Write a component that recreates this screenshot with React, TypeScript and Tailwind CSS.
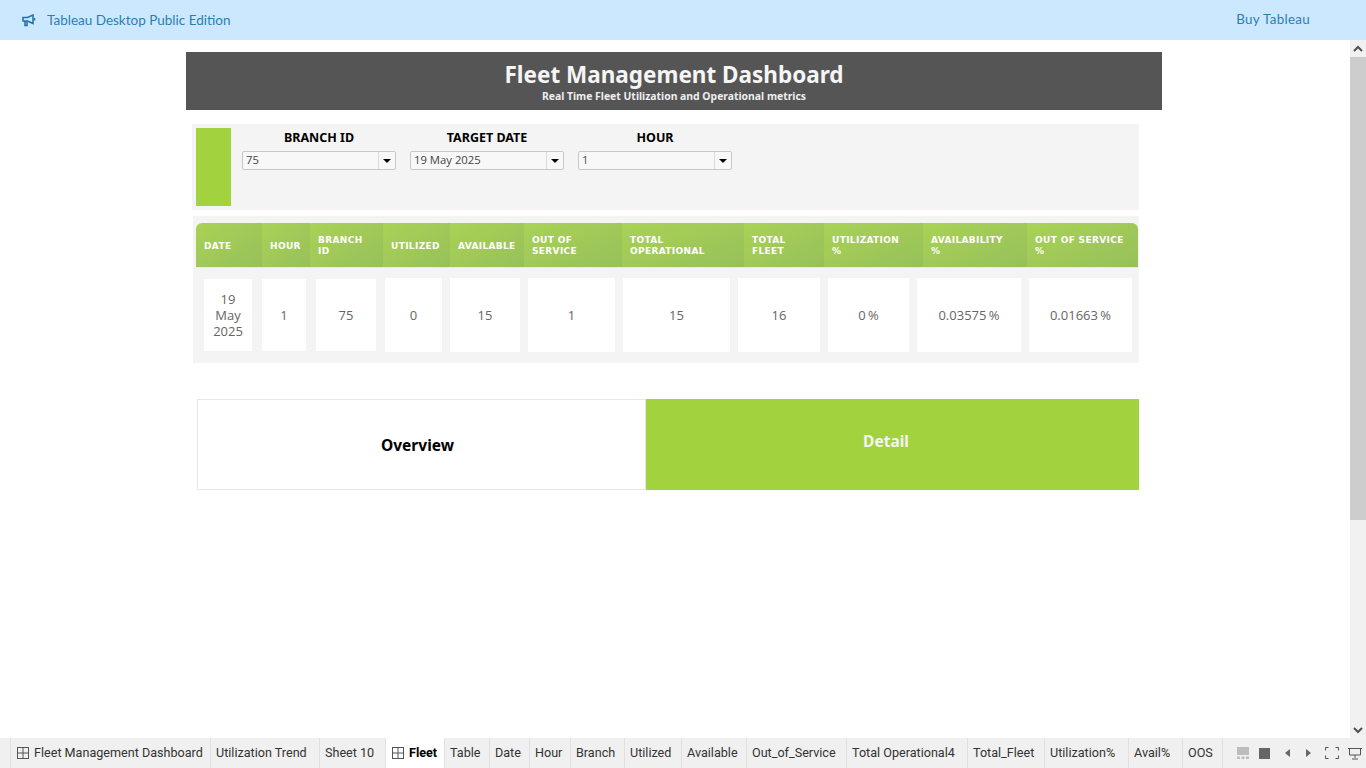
import React from 'react';

const headFont = "font-['Noto_Sans',sans-serif]";

const columns = [
  { head: 'DATE', width: 'w-[66px]', rounded: 'rounded-tl-[6px]' },
  { head: 'HOUR', width: 'w-[48px]' },
  { head: 'BRANCH\nID', width: 'w-[73px]' },
  { head: 'UTILIZED', width: 'w-[67px]' },
  { head: 'AVAILABLE', width: 'w-[74px]' },
  { head: 'OUT OF\nSERVICE', width: 'w-[98px]' },
  { head: 'TOTAL\nOPERATIONAL', width: 'w-[122px]' },
  { head: 'TOTAL\nFLEET', width: 'w-[80px]' },
  { head: 'UTILIZATION\n%', width: 'w-[99px]' },
  { head: 'AVAILABILITY\n%', width: 'w-[104px]' },
  { head: 'OUT OF SERVICE\n%', width: 'w-[111px]', rounded: 'rounded-tr-[6px]' },
];

const cells = [
  { value: '19\nMay\n2025', cls: 'w-[48px] ml-[8px] h-[72px]' },
  { value: '1', cls: 'w-[44px] ml-[10px] h-[72px]' },
  { value: '75', cls: 'w-[60px] ml-[10px] h-[72px]' },
  { value: '0', cls: 'w-[57px] ml-[9px] h-[74px]' },
  { value: '15', cls: 'w-[70px] ml-[8px] h-[74px]' },
  { value: '1', cls: 'w-[87px] ml-[8px] h-[74px]' },
  { value: '15', cls: 'w-[107px] ml-[8px] h-[74px]' },
  { value: '16', cls: 'w-[82px] ml-[8px] h-[74px]' },
  { value: '0 %', cls: 'w-[81px] ml-[8px] h-[74px]' },
  { value: '0.03575 %', cls: 'w-[104px] ml-[8px] h-[74px]' },
  { value: '0.01663 %', cls: 'w-[103px] ml-[8px] h-[74px]' },
];

const tabs = [
  { name: 'Fleet Management Dashboard', width: 'w-[200px]', icon: true },
  { name: 'Utilization Trend', width: 'w-[109px]' },
  { name: 'Sheet 10', width: 'w-[66px]' },
  { name: 'Fleet', width: 'w-[59px]', icon: true, active: true },
  { name: 'Table', width: 'w-[45px]' },
  { name: 'Date', width: 'w-[40px]' },
  { name: 'Hour', width: 'w-[41px]' },
  { name: 'Branch', width: 'w-[54px]' },
  { name: 'Utilized', width: 'w-[57px]' },
  { name: 'Available', width: 'w-[65px]' },
  { name: 'Out_of_Service', width: 'w-[100px]' },
  { name: 'Total Operational4', width: 'w-[121px]' },
  { name: 'Total_Fleet', width: 'w-[77px]' },
  { name: 'Utilization%', width: 'w-[84px]' },
  { name: 'Avail%', width: 'w-[54px]' },
  { name: 'OOS', width: 'w-[40px]' },
];

function Megaphone() {
  return (
    <svg width="14" height="13" viewBox="0 0 14 13" fill="none" stroke="#1f6fa8" strokeWidth="1.5">
      <path d="M1 3.5h4.5L11 1v8.5L5.5 7H1z" />
      <path d="M3 7v4.5h2V7.5" />
      <path d="M12.5 4v2.5" />
    </svg>
  );
}

function GridIcon() {
  return (
    <svg width="12" height="12" viewBox="0 0 12 12" fill="none" stroke="#555" strokeWidth="1" className="shrink-0">
      <rect x="0.5" y="0.5" width="11" height="11" />
      <path d="M6 0.5v11M0.5 6h11" />
    </svg>
  );
}

function Filter({ label, value, valueCls }: { label: string; value: string; valueCls?: string }) {
  return (
    <div className="w-[154px] flex flex-col">
      <div className={`h-[23px] text-center text-[12.5px] leading-[19px] font-bold text-black ${headFont}`}>{label}</div>
      <div className="h-[19px] flex items-center border border-[#c8c8c8] rounded-[2px] bg-[#f8f8f8]">
        <span className={`flex-1 pl-[3px] text-[11.3px] font-['Open_Sans',sans-serif] ${valueCls ?? 'text-[#444]'}`}>{value}</span>
        <span className="w-[17px] h-full border-l border-[#dcdcdc] flex items-center justify-center">
          <span className="w-0 h-0 border-l-[4px] border-r-[4px] border-t-[4px] border-l-transparent border-r-transparent border-t-black" />
        </span>
      </div>
    </div>
  );
}

function ScrollArrow({ up }: { up?: boolean }) {
  return (
    <div className="h-[16px] flex items-center justify-center bg-[#f1f1f1]">
      <svg width="10" height="7" viewBox="0 0 10 7" fill="none" stroke="#505050" strokeWidth="2">
        <path d={up ? 'M1 6l4-4 4 4' : 'M1 1l4 4 4-4'} />
      </svg>
    </div>
  );
}

export default function App() {
  return (
    <div className="w-[1366px] h-[768px] overflow-hidden bg-white flex flex-col font-['Roboto',sans-serif]">
      <div className="h-[40px] shrink-0 bg-[#cce8ff] flex items-center pl-[22px] pr-[56px] text-[#2a7fb0]">
        <Megaphone />
        <span className="ml-[11px] text-[13.5px] font-['Lato',sans-serif]">Tableau Desktop Public Edition</span>
        <span className="ml-auto text-[13.4px] tracking-[0.3px] font-['Lato',sans-serif] -mt-[2px]">Buy Tableau</span>
      </div>

      <div className="flex-1 flex min-h-0">
        <div className="w-[1350px] pl-[186px] pt-[12px]">
          <div className="w-[976px] h-[58px] bg-[#555555] flex flex-col items-center">
            <div className={`text-[22.5px] leading-[28px] mt-[9px] font-bold text-[#f5f5f5] ${headFont}`}>Fleet Management Dashboard</div>
            <div className={`text-[10.4px] leading-[13px] mt-[1px] font-bold text-[#eeeeee] ${headFont}`}>Real Time Fleet Utilization and Operational metrics</div>
          </div>

          <div className="ml-[6px] mt-[14px] w-[947px] h-[86px] bg-[#f4f4f4] flex p-[4px]">
            <div className="w-[35px] h-[78px] bg-[#a2d33f]" />
            <div className="ml-[11px] flex gap-[14px] items-start">
              <Filter label="BRANCH ID" value="75" />
              <Filter label="TARGET DATE" value="19 May 2025" />
              <Filter label="HOUR" value="1" valueCls="text-[#7a3b3b]" />
            </div>
          </div>

          <div className="ml-[7px] mt-[6px] w-[946px] h-[147px] bg-[#f4f4f4] pt-[7px] pl-[3px]">
            <div className="flex w-[942px] h-[45px] border-b border-[#e4efd2]">
              {columns.map(col => (
                <div
                  key={col.head}
                  className={`${col.width} ${col.rounded ?? ''} bg-gradient-to-br from-[#a9d256] to-[#97c05a] pl-[8px] pr-[2px] pt-[2px] flex items-center whitespace-pre-line text-white text-[9px] leading-[11px] font-bold tracking-[0.35px] font-['DejaVu_Sans',sans-serif]`}
                >
                  {col.head}
                </div>
              ))}
            </div>
            <div className="flex items-center h-[74px] mt-[10px]">
              {cells.map((cell, i) => (
                <div
                  key={i}
                  className={`${cell.cls} shrink-0 bg-white flex items-center justify-center text-center whitespace-pre-line text-[13px] leading-[16px] text-[#666] [word-spacing:-1px] font-['Open_Sans',sans-serif]`}
                >
                  {cell.value}
                </div>
              ))}
            </div>
          </div>

          <div className="ml-[11px] mt-[36px] flex h-[91px] w-[942px]">
            <div className={`w-[449px] border border-[#e6e6e6] flex items-center justify-center pr-[8px] pt-[2px] text-[15.5px] font-bold text-black ${headFont}`}>
              Overview
            </div>
            <div className={`w-[493px] bg-[#a2d33f] flex items-center justify-center pr-[13px] pb-[6px] text-[15.5px] font-bold text-[#f4f4f4] ${headFont}`}>
              Detail
            </div>
          </div>
        </div>

        <div className="w-[16px] flex flex-col bg-[#f1f1f1]">
          <ScrollArrow up />
          <div className="h-[463px] mt-[1px] bg-[#cdcdcd]" />
          <div className="flex-1" />
          <ScrollArrow />
        </div>
      </div>

      <div className="h-[30px] shrink-0 bg-[#f0f0f0] flex items-stretch pl-[10px] font-['Roboto',sans-serif] text-[12.6px] text-[#333]">
        {tabs.map(tab => (
          <div
            key={tab.name}
            className={`${tab.width} shrink-0 flex items-center border-l border-[#e0e0e0] whitespace-nowrap ${tab.active ? 'bg-white font-bold text-black' : ''} ${tab.icon ? 'pl-[6px] gap-[5px]' : 'pl-[5px]'}`}
          >
            {tab.icon && <GridIcon />}
            <span>{tab.name}</span>
          </div>
        ))}
        <div className="border-l border-[#e0e0e0] flex items-center pl-[14px] gap-[10px] flex-1">
          <svg width="12" height="12" viewBox="0 0 12 12" fill="#bdbdbd">
            <rect width="12" height="8" />
            <rect y="9.5" width="3" height="2.5" />
            <rect x="4.5" y="9.5" width="3" height="2.5" />
            <rect x="9" y="9.5" width="3" height="2.5" />
          </svg>
          <span className="w-[11px] h-[11px] bg-[#666]" />
          <svg width="7" height="8" viewBox="0 0 7 8" fill="#666" className="ml-[4px]">
            <path d="M6 0v8L1 4z" />
          </svg>
          <svg width="7" height="8" viewBox="0 0 7 8" fill="#666" className="ml-[4px]">
            <path d="M1 0v8l5-4z" />
          </svg>
          <svg width="14" height="12" viewBox="0 0 14 12" fill="none" stroke="#555" strokeWidth="1" className="ml-[3px] shrink-0">
            <path d="M0.5 3.5v-3h3M10.5 0.5h3v3M13.5 8.5v3h-3M3.5 11.5h-3v-3" />
          </svg>
          <svg width="14" height="13" viewBox="0 0 14 13" fill="none" stroke="#555" strokeWidth="1" className="-ml-[1px] shrink-0">
            <path d="M0 1.5h14M1.5 1.5v6.5h11V1.5M7 8v3M4 12h6" />
          </svg>
        </div>
      </div>
    </div>
  );
}
